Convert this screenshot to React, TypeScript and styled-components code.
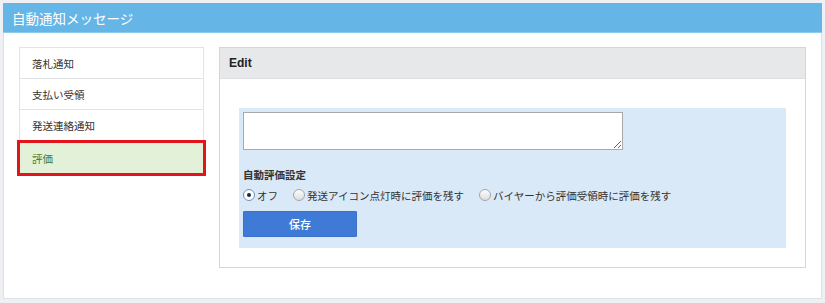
import React, { useState } from 'react';
import styled, { createGlobalStyle, css } from 'styled-components';

const GlobalStyle = createGlobalStyle`
  html, body {
    margin: 0;
    padding: 0;
    background: #eef0f3;
  }
  body {
    font-family: 'Noto Sans CJK JP', 'Liberation Sans', sans-serif;
    color: #333;
  }
  * {
    box-sizing: border-box;
  }
`;

const Page = styled.div`
  padding: 3px 3px 4px 3px;
`;

const Card = styled.div`
  width: 819px;
  height: 296px;
  background: #fff;
  border: 1px solid #dde0e4;
  border-top: none;
`;

const CardHeader = styled.div`
  height: 30px;
  background: #65b6e7;
  color: #fff;
  font-size: 13.5px;
  line-height: 30px;
  padding-left: 9px;
  margin: 0 -1px;
  border-bottom: 1px solid #8fc9ec;
`;

const CardBody = styled.div`
  display: grid;
  grid-template-columns: 185px 1fr;
  column-gap: 15px;
  padding: 14px 15px 30px 15px;
  align-items: start;
`;

const Menu = styled.ul`
  list-style: none;
  margin: 0;
  padding: 0;
`;

const MenuItem = styled.li<{ active?: boolean }>`
  height: 32px;
  display: flex;
  align-items: center;
  padding-left: 12px;
  font-size: 10.5px;
  color: #333;
  border: 1px solid #e1e3e6;
  margin-bottom: -1px;
  cursor: pointer;

  ${({ active }) =>
    active &&
    css`
      height: 36px;
      margin: 0 -2px;
      border: 3px solid #e3141b;
      background: #e2f1d8;
      color: #4a7a34;
    `}
`;

const Panel = styled.div`
  border: 1px solid #d4d6d9;
`;

const PanelHeader = styled.div`
  height: 31px;
  background: #e7e8ea;
  border-bottom: 1px solid #dcdee1;
  padding-left: 9px;
  display: flex;
  align-items: center;
  font-family: 'Liberation Sans', 'Noto Sans', sans-serif;
  font-size: 12px;
  font-weight: bold;
  color: #222;
`;

const PanelBody = styled.div`
  padding: 29px 19px 19px 19px;
`;

const Form = styled.div`
  background: #d9e9f8;
  padding: 4px 4px 11px 4px;
  display: flex;
  flex-direction: column;
  align-items: flex-start;
`;

const TextArea = styled.textarea`
  width: 380px;
  height: 38px;
  border: 1px solid #a9a9a9;
  background: #fff;
  padding: 2px;
  margin: 0;
  font-size: 11px;
  display: block;
`;

const Label = styled.div`
  margin-top: 17px;
  font-size: 10.5px;
  font-weight: bold;
  line-height: 16px;
  color: #333;
`;

const RadioRow = styled.div`
  display: flex;
  align-items: center;
  gap: 15px;
  margin-top: 4px;
  height: 16px;
`;

const RadioLabel = styled.label`
  display: flex;
  align-items: center;
  gap: 2px;
  font-size: 10.5px;
  color: #333;
  cursor: pointer;
`;

const RadioInput = styled.input.attrs({ type: 'radio' })`
  appearance: none;
  margin: 0;
  width: 12px;
  height: 12px;
  border-radius: 50%;
  border: 1px solid #a3a6aa;
  background: linear-gradient(#fdfdfd, #dcdde0);
  position: relative;
  cursor: pointer;

  &:checked {
    border-color: #6d8fbf;
    background: #fff;
  }

  &:checked::after {
    content: '';
    position: absolute;
    left: 3px;
    top: 3px;
    width: 4px;
    height: 4px;
    border-radius: 50%;
    background: #1d2a3a;
  }
`;

const SaveButton = styled.button`
  margin-top: 8px;
  width: 114px;
  height: 26px;
  border: 1px solid #3a72c9;
  background: #3e7ad6;
  color: #fff;
  font-family: 'Noto Sans CJK JP', sans-serif;
  font-size: 11px;
  font-weight: 500;
  border-radius: 1px;
  cursor: pointer;
`;

const menuItems = ['落札通知', '支払い受領', '発送連絡通知', '評価'];

const options = [
  { id: 'off', label: 'オフ' },
  { id: 'ship', label: '発送アイコン点灯時に評価を残す' },
  { id: 'buyer', label: 'バイヤーから評価受領時に評価を残す' },
];

const App = () => {
  const [active, setActive] = useState('評価');
  const [setting, setSetting] = useState('off');

  return (
    <Page>
      <GlobalStyle />
      <Card>
        <CardHeader>自動通知メッセージ</CardHeader>
        <CardBody>
          <Menu>
            {menuItems.map((item) => (
              <MenuItem key={item} active={item === active} onClick={() => setActive(item)}>
                {item}
              </MenuItem>
            ))}
          </Menu>
          <Panel>
            <PanelHeader>Edit</PanelHeader>
            <PanelBody>
              <Form>
                <TextArea />
                <Label>自動評価設定</Label>
                <RadioRow>
                  {options.map((opt) => (
                    <RadioLabel key={opt.id}>
                      <RadioInput
                        name='auto-review'
                        checked={setting === opt.id}
                        onChange={() => setSetting(opt.id)}
                      />
                      {opt.label}
                    </RadioLabel>
                  ))}
                </RadioRow>
                <SaveButton>保存</SaveButton>
              </Form>
            </PanelBody>
          </Panel>
        </CardBody>
      </Card>
    </Page>
  );
};

export default App;
